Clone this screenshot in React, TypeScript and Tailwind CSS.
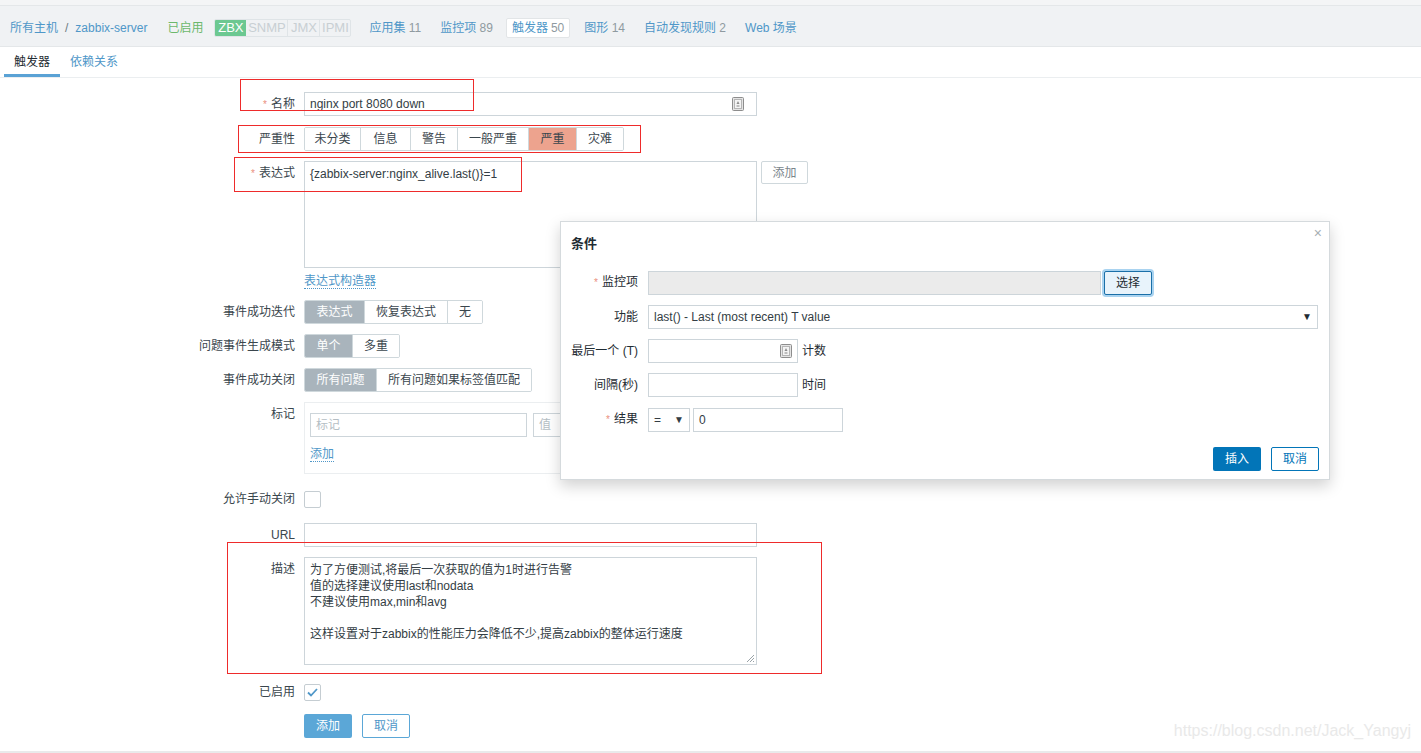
import type { ReactNode } from "react";

const LINK = "text-[#4f97c8]";
const INPUT = "h-[24px] border border-[#cdd5da] bg-white px-[5px] text-[12px] leading-[22px] text-[#333d44]";

function KeyIcon() {
  return (
    <svg width="12" height="14" viewBox="0 0 12 14">
      <rect x="0.5" y="0.5" width="11" height="13" rx="1" fill="#e4e4e4" stroke="#8d8d8d" />
      <rect x="2.5" y="2.5" width="7" height="9" fill="#f4f4f4" stroke="#b5b5b5" />
      <path d="M6 4 L7.5 7 L4.5 7 Z" fill="#8d8d8d" />
      <rect x="4.5" y="8" width="3" height="2" fill="#bdbdbd" />
    </svg>
  );
}

function Req() {
  return <span className="mr-[4px] text-[10px] text-[#ea8f80]">*</span>;
}

function Row({
  label,
  required,
  className = "",
  children,
}: {
  label: string;
  required?: boolean;
  className?: string;
  children: ReactNode;
}) {
  return (
    <div className={`flex ${className}`}>
      <div className="w-[295px] shrink-0 text-right leading-[24px] text-[#3a464d]">
        {required && <Req />}
        {label}
      </div>
      <div className="ml-[9px] flex items-start">{children}</div>
    </div>
  );
}

type Seg = { text: string; w: string; active?: boolean; activeCls?: string };

function Segmented({ items }: { items: Seg[] }) {
  return (
    <div className="flex h-[24px] overflow-hidden rounded-[2px] border border-[#cfd8dc]">
      {items.map((s, i) => (
        <div
          key={s.text}
          className={`${s.w} flex items-center justify-center ${i > 0 ? "border-l border-[#cfd8dc]" : ""} ${
            s.active ? s.activeCls ?? "bg-[#a9b4bc] text-white" : "bg-white text-[#3a464d]"
          }`}
        >
          {s.text}
        </div>
      ))}
    </div>
  );
}

function Checkbox({ checked }: { checked?: boolean }) {
  return (
    <div className="flex h-[17px] w-[17px] items-center justify-center rounded-[2px] border border-[#c5cdd2] bg-white">
      {checked && (
        <svg width="11" height="9" viewBox="0 0 11 9">
          <path d="M1 4.5 L4 7.5 L10 1" fill="none" stroke="#4f97c8" strokeWidth="1.8" />
        </svg>
      )}
    </div>
  );
}

function DRow({ label, required, className = "", children }: { label: string; required?: boolean; className?: string; children: ReactNode }) {
  return (
    <div className={`flex ${className}`}>
      <div className="w-[67px] shrink-0 whitespace-nowrap text-right leading-[24px] text-[#1f2c33]">
        {required && <Req />}
        {label}
      </div>
      <div className="ml-[10px] flex items-center">{children}</div>
    </div>
  );
}

function ConditionDialog() {
  return (
    <div className="absolute left-[560px] top-[221px] h-[259px] w-[770px] border border-[#d5dadd] bg-white px-[10px] shadow-[0_6px_14px_rgba(0,0,0,0.18)]">
      <div className="absolute right-[7px] top-[4px] text-[14px] leading-[14px] text-[#a7afb4]">×</div>
      <div className="pt-[14px] text-[13px] font-bold leading-[16px] text-[#1f2c33]">条件</div>
      <DRow label="监控项" required className="mt-[18px]">
        <div className="h-[24px] w-[453px] border border-[#cdd5da] bg-[#ebebeb]" />
        <div className="ml-[3px] flex h-[24px] w-[48px] items-center justify-center rounded-[2px] border border-[#1a6fa8] bg-[#e8f3fb] text-[#1f2c33] shadow-[0_0_0_2px_#a9d3f0]">
          选择
        </div>
      </DRow>
      <DRow label="功能" className="mt-[10px]">
        <div className={`${INPUT} flex w-[670px] items-center justify-between text-[#1f2c33]`}>
          <span>last() - Last (most recent) T value</span>
          <span className="text-[10px] text-[#1f2c33]">▼</span>
        </div>
      </DRow>
      <DRow label="最后一个 (T)" className="mt-[10px]">
        <div className={`${INPUT} flex w-[150px] items-center justify-end`}>
          <KeyIcon />
        </div>
        <span className="ml-[4px] text-[#1f2c33]">计数</span>
      </DRow>
      <DRow label="间隔(秒)" className="mt-[10px]">
        <div className={`${INPUT} w-[150px]`} />
        <span className="ml-[4px] text-[#1f2c33]">时间</span>
      </DRow>
      <DRow label="结果" required className="mt-[10px]">
        <div className={`${INPUT} flex w-[42px] items-center justify-between text-[#1f2c33]`}>
          <span>=</span>
          <span className="text-[10px]">▼</span>
        </div>
        <div className={`${INPUT} ml-[3px] w-[150px] text-[#1f2c33]`}>0</div>
      </DRow>
      <div className="mt-[15px] flex justify-end gap-[10px]">
        <div className="flex h-[24px] w-[48px] items-center justify-center rounded-[2px] bg-[#0275b8] text-white">插入</div>
        <div className="flex h-[24px] w-[48px] items-center justify-center rounded-[2px] border border-[#0275b8] bg-white text-[#0275b8]">
          取消
        </div>
      </div>
    </div>
  );
}

export default function App() {
  return (
    <div className="relative h-[753px] w-full overflow-hidden border-b-2 border-[#e9eaeb] bg-white font-['Liberation_Sans','Noto_Sans_CJK_SC',sans-serif] text-[12px] text-[#333d44]">
      <div className="h-[6px] border-b border-[#e4e7e9] bg-[#f4f5f6]" />

      {/* host nav */}
      <div className="flex h-[41px] items-center border-b border-[#e4e7e9] bg-[#f0f2f4] pl-[10px] pt-[3px]">
        <span className={LINK}>所有主机</span>
        <span className="mx-[7px] text-[#6d7a82]">/</span>
        <span className={LINK}>zabbix-server</span>
        <span className="ml-[20px] text-[#6cb86c]">已启用</span>
        <div className="ml-[11px] flex h-[18px] items-stretch overflow-hidden rounded-[2px] border border-[#dfe4e7] text-[13px]">
          <span className="flex w-[31px] items-center justify-center bg-[#6cc891] text-white">ZBX</span>
          <span className="flex w-[41px] items-center justify-center text-[#c8cfd3]">SNMP</span>
          <span className="flex w-[32px] items-center justify-center border-l border-[#dfe4e7] text-[#c8cfd3]">JMX</span>
          <span className="flex w-[31px] items-center justify-center border-l border-[#dfe4e7] text-[#c8cfd3]">IPMI</span>
        </div>
        <span className={`ml-[18px] ${LINK}`}>
          应用集 <span className="text-[#8f9aa0]">11</span>
        </span>
        <span className={`ml-[19px] ${LINK}`}>
          监控项 <span className="text-[#8f9aa0]">89</span>
        </span>
        <span className={`ml-[13px] flex h-[20px] items-center rounded-[2px] border border-[#e2e5e7] bg-white px-[5px] ${LINK}`}>
          触发器 <span className="ml-[3px] text-[#8f9aa0]">50</span>
        </span>
        <span className={`ml-[14px] ${LINK}`}>
          图形 <span className="text-[#8f9aa0]">14</span>
        </span>
        <span className={`ml-[19px] ${LINK}`}>
          自动发现规则 <span className="text-[#8f9aa0]">2</span>
        </span>
        <span className={`ml-[19px] ${LINK}`}>Web 场景</span>
      </div>

      {/* tabs */}
      <div className="flex h-[31px] border-b border-[#ebeef0] pl-[4px]">
        <div className="flex items-center border-b-[3px] border-[#5aa2d5] px-[10px] pt-[3px] text-[#1f2c33]">触发器</div>
        <div className={`flex items-center px-[10px] ${LINK}`}>依赖关系</div>
      </div>

      {/* form */}
      <div className="flex flex-col pt-[14px]">
        <Row label="名称" required>
          <div className={`${INPUT} flex w-[453px] items-center justify-between`}>
            <span>nginx port 8080 down</span>
            <span className="mr-[7px] flex">
              <KeyIcon />
            </span>
          </div>
        </Row>

        <Row label="严重性" className="mt-[10px]">
          <Segmented
            items={[
              { text: "未分类", w: "w-[55px]" },
              { text: "信息", w: "w-[50px]" },
              { text: "警告", w: "w-[47px]" },
              { text: "一般严重", w: "w-[71px]" },
              { text: "严重", w: "w-[48px]", active: true, activeCls: "bg-[#eda38e] text-[#3a464d]" },
              { text: "灾难", w: "w-[47px]" },
            ]}
          />
        </Row>

        <Row label="表达式" required className="mt-[10px]">
          <div className="h-[107px] w-[453px] border border-[#cdd5da] px-[5px] py-[4px] leading-[16px]">
            {"{zabbix-server:nginx_alive.last()}=1"}
          </div>
          <div className="ml-[4px] flex h-[23px] w-[47px] items-center justify-center rounded-[2px] border border-[#cfd8dc] text-[#7a858b]">
            添加
          </div>
        </Row>

        <div className="ml-[304px] mt-[4px] h-[20px]">
          <span className={`${LINK} border-b border-dotted border-[#4f97c8] leading-[18px]`}>表达式构造器</span>
        </div>

        <Row label="事件成功迭代" className="mt-[8px]">
          <Segmented
            items={[
              { text: "表达式", w: "w-[59px]", active: true },
              { text: "恢复表达式", w: "w-[83px]" },
              { text: "无", w: "w-[35px]" },
            ]}
          />
        </Row>

        <Row label="问题事件生成模式" className="mt-[10px]">
          <Segmented
            items={[
              { text: "单个", w: "w-[47px]", active: true },
              { text: "多重", w: "w-[47px]" },
            ]}
          />
        </Row>

        <Row label="事件成功关闭" className="mt-[10px]">
          <Segmented
            items={[
              { text: "所有问题", w: "w-[71px]", active: true },
              { text: "所有问题如果标签值匹配", w: "w-[155px]" },
            ]}
          />
        </Row>

        <Row label="标记" className="mt-[10px]">
          <div className="h-[72px] w-[600px] border border-[#ebeef0] px-[5px] pt-[10px]">
            <div className="flex gap-[6px]">
              <div className={`${INPUT} w-[217px] text-[#b5bec4]`}>标记</div>
              <div className={`${INPUT} w-[217px] text-[#b5bec4]`}>值</div>
            </div>
            <div className="mt-[8px]">
              <span className={`${LINK} border-b border-dotted border-[#4f97c8]`}>添加</span>
            </div>
          </div>
        </Row>

        <div className="mt-[17px] flex">
          <div className="w-[295px] shrink-0 text-right leading-[17px] text-[#3a464d]">允许手动关闭</div>
          <div className="ml-[9px]">
            <Checkbox />
          </div>
        </div>

        <Row label="URL" className="mt-[15px]">
          <div className={`${INPUT} w-[453px]`} />
        </Row>

        <Row label="描述" className="mt-[10px]">
          <div className="relative h-[108px] w-[453px] border border-[#cdd5da] px-[5px] py-[4px] leading-[16px] text-[#333d44]">
            <div>为了方便测试,将最后一次获取的值为1时进行告警</div>
            <div>值的选择建议使用last和nodata</div>
            <div>不建议使用max,min和avg</div>
            <div className="h-[16px]" />
            <div>这样设置对于zabbix的性能压力会降低不少,提高zabbix的整体运行速度</div>
            <svg className="absolute bottom-[1px] right-[1px]" width="9" height="9" viewBox="0 0 9 9">
              <path d="M8 1 L1 8 M8 4 L4 8 M8 7 L7 8" stroke="#9aa3a8" strokeWidth="1" />
            </svg>
          </div>
        </Row>

        <div className="mt-[19px] flex">
          <div className="w-[295px] shrink-0 text-right leading-[17px] text-[#3a464d]">已启用</div>
          <div className="ml-[9px]">
            <Checkbox checked />
          </div>
        </div>

        <div className="ml-[304px] mt-[13px] flex gap-[10px]">
          <div className="flex h-[24px] w-[48px] items-center justify-center rounded-[2px] bg-[#5ba7d7] text-white">添加</div>
          <div className="flex h-[24px] w-[48px] items-center justify-center rounded-[2px] border border-[#5ba7d7] bg-white text-[#4f97c8]">
            取消
          </div>
        </div>
      </div>

      <ConditionDialog />

      {/* red annotation boxes */}
      <div className="pointer-events-none absolute left-[240px] top-[79px] h-[32px] w-[234px] border border-[#ee2b2b]" />
      <div className="pointer-events-none absolute left-[238px] top-[125px] h-[28px] w-[403px] border border-[#ee2b2b]" />
      <div className="pointer-events-none absolute left-[234px] top-[157px] h-[35px] w-[288px] border border-[#ee2b2b]" />
      <div className="pointer-events-none absolute left-[227px] top-[542px] h-[132px] w-[595px] border border-[#ee2b2b]" />

      <div className="pointer-events-none absolute bottom-[8px] right-[10px] text-[16px] text-[#e9e9e9]">
        https://blog.csdn.net/Jack_Yangyj
      </div>
    </div>
  );
}
